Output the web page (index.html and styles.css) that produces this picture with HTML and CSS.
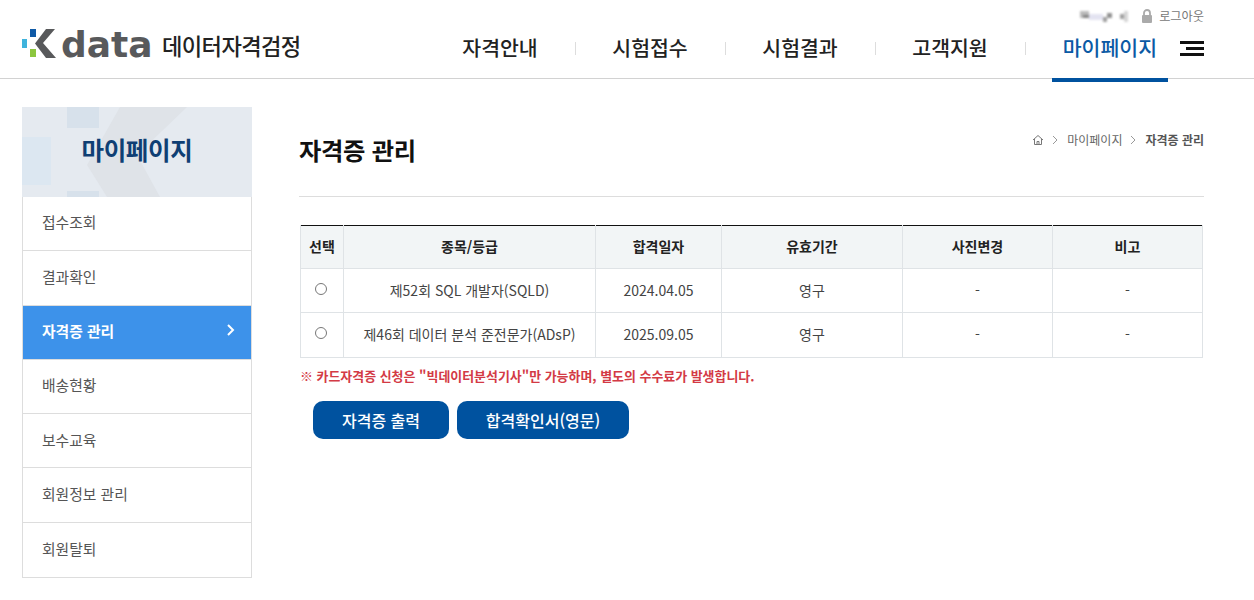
FILE: index.html
```html
<!DOCTYPE html>
<html lang="ko">
<head>
<meta charset="utf-8">
<title>자격증 관리</title>
<link rel="stylesheet" href="styles.css">
</head>
<body>
<header class="header">
  <a class="logo" href="#">
    <svg class="logo-mark" width="36" height="32" viewBox="0 0 36 32">
      <rect x="8" y="1" width="6" height="8" fill="#0f5aa6"/>
      <rect x="0" y="11" width="5" height="9" fill="#3fb3dc"/>
      <rect x="8" y="21" width="6" height="8" fill="#8cc63f"/>
      <polygon points="24,1 33,1 21,15 34,30 24,30 13,15.500" fill="#58595b"/>
    </svg>
    <span class="logo-data">data</span>
    <span class="logo-name">데이터자격검정</span>
  </a>
  <div class="header-right">
    <div class="util">
      <svg class="blur-name" width="48" height="12" viewBox="0 0 48 12">
        <rect x="0" y="1" width="9" height="7" fill="#aaa"/>
        <rect x="3" y="5" width="6" height="3" fill="#666"/>
        <rect x="9" y="4" width="14" height="6" fill="#dde"/>
        <rect x="23" y="7" width="4" height="5" fill="#888"/>
        <rect x="27" y="3" width="5" height="5" fill="#777"/>
        <rect x="40" y="4" width="4" height="5" fill="#888"/>
        <rect x="44" y="1" width="4" height="11" fill="#ccc"/>
      </svg>
      <svg class="lock" width="12" height="14" viewBox="0 0 12 14"><path d="M3 6V4a3 3 0 0 1 6 0v2" fill="none" stroke="#aaa" stroke-width="1.800"/><rect x="1" y="6" width="10" height="8" rx="1" fill="#aaa"/></svg>
      <span class="logout">로그아웃</span>
    </div>
    <nav class="gnb">
      <a class="gnb-item" href="#">자격안내</a>
      <a class="gnb-item" href="#">시험접수</a>
      <a class="gnb-item" href="#">시험결과</a>
      <a class="gnb-item" href="#">고객지원</a>
      <a class="gnb-item active" href="#">마이페이지</a>
      <span class="burger"><i></i><i></i><i></i></span>
    </nav>
  </div>
</header>
<div class="wrap">
  <aside class="side">
    <div class="side-title">
      <svg class="side-bg" width="230" height="90" viewBox="0 0 230 90">
        <rect x="45" y="0" width="32" height="21" fill="#d7e1eb"/>
        <rect x="0" y="30" width="29" height="48" fill="#dce7f1"/>
        <rect x="45" y="84" width="32" height="6" fill="#d7e1eb"/>
        <polygon points="98,0 165,0 115,48 138,90 85,90 65,58" fill="#dfe3e8"/>
      </svg>
      <h2>마이페이지</h2>
    </div>
    <ul class="side-menu">
      <li><a href="#">접수조회</a></li>
      <li><a href="#">결과확인</a></li>
      <li class="on"><a href="#">자격증 관리<svg width="10" height="14" viewBox="0 0 10 14"><path d="M2 2l5 5-5 5" fill="none" stroke="#fff" stroke-width="2"/></svg></a></li>
      <li><a href="#">배송현황</a></li>
      <li><a href="#">보수교육</a></li>
      <li><a href="#">회원정보 관리</a></li>
      <li><a href="#">회원탈퇴</a></li>
    </ul>
  </aside>
  <main class="main">
    <div class="title-row">
      <h1>자격증 관리</h1>
      <div class="crumbs">
        <svg width="12" height="12" viewBox="0 0 12 12"><path d="M1 6l5-4.500L11 6M2.500 5v5.500h7V5M5 10.500V7.500h2v3" fill="none" stroke="#777" stroke-width="1"/></svg>
        <svg class="chev" width="7" height="10" viewBox="0 0 7 10"><path d="M1 1l4 4-4 4" fill="none" stroke="#999" stroke-width="1"/></svg>
        <span>마이페이지</span>
        <svg class="chev" width="7" height="10" viewBox="0 0 7 10"><path d="M1 1l4 4-4 4" fill="none" stroke="#999" stroke-width="1"/></svg>
        <strong>자격증 관리</strong>
      </div>
    </div>
    <table class="tbl">
      <colgroup>
        <col class="c1"><col class="c2"><col class="c3"><col class="c4"><col class="c5"><col class="c6">
      </colgroup>
      <thead>
        <tr><th>선택</th><th>종목/등급</th><th>합격일자</th><th>유효기간</th><th>사진변경</th><th>비고</th></tr>
      </thead>
      <tbody>
        <tr><td><input class="radio" type="radio" name="cert"></td><td>제52회 SQL 개발자(SQLD)</td><td>2024.04.05</td><td>영구</td><td>-</td><td>-</td></tr>
        <tr class="row2"><td><input class="radio" type="radio" name="cert"></td><td>제46회 데이터 분석 준전문가(ADsP)</td><td>2025.09.05</td><td>영구</td><td>-</td><td>-</td></tr>
      </tbody>
    </table>
    <p class="notice">※ 카드자격증 신청은 "빅데이터분석기사"만 가능하며, 별도의 수수료가 발생합니다.</p>
    <div class="btns">
      <a class="btn b1" href="#">자격증 출력</a>
      <a class="btn b2" href="#">합격확인서(영문)</a>
    </div>
  </main>
</div>
</body>
</html>
```
FILE: styles.css
```css
* { box-sizing: border-box; }
html, body { margin: 0; padding: 0; height: 600px; overflow: hidden; background: #fff; }
body { font-family: "Noto Sans CJK KR", "Noto Sans", sans-serif; color: #333; }
a { text-decoration: none; color: inherit; }
ul { list-style: none; margin: 0; padding: 0; }

.header { height: 79px; border-bottom: 1px solid #d2d2d2; display: flex; justify-content: space-between; padding: 0 50px 0 22px; }
.logo { display: flex; align-items: center; height: 32px; margin-top: 28px; }
.logo-mark { flex: none; margin-right: 3px; }
.logo-data { font-family: "DejaVu Sans", sans-serif; font-size: 36px; line-height: 32px; color: #58595b; font-weight: 700; width: 94px; margin-top: 1px; }
.logo-name { font-size: 22.200px; line-height: 32px; font-weight: 500; color: #222; margin: 2px 0 0 7px; letter-spacing: -0.600px; }

.header-right { display: flex; flex-direction: column; align-items: flex-end; }
.util { height: 31px; display: flex; align-items: center; font-size: 12.200px; color: #777; }
.blur-name { margin-right: 13px; filter: blur(1px); opacity: .8; }
.lock { margin-right: 6px; }

.gnb { display: flex; height: 47px; align-items: stretch; }
.gnb-item { position: relative; width: 150px; display: flex; justify-content: center; padding-top: 1px; font-size: 20.500px; line-height: 30px; font-weight: 500; color: #222; }
.gnb-item + .gnb-item::before { content: ""; position: absolute; left: 0; top: 11px; width: 1px; height: 13px; background: #ddd; }
.gnb-item.active { color: #0b5aa5; width: 143px; justify-content: flex-end; padding-right: 11px; }
.gnb-item.active::after { content: ""; position: absolute; right: 0; bottom: -4px; width: 116px; height: 4px; background: #00529f; z-index: 1; }
.burger { width: 24px; margin-left: 12px; display: flex; flex-direction: column; align-items: flex-end; gap: 3px; padding-top: 10px; }
.burger i { display: block; height: 3px; background: #111; width: 24px; }
.burger i:nth-child(2) { width: 18px; }

.wrap { display: flex; padding: 28px 50px 0 22px; }
.side { width: 230px; flex: none; }
.side-title { position: relative; height: 90px; background: #e5eaf0; overflow: hidden; display: flex; align-items: center; justify-content: center; }
.side-bg { position: absolute; left: 0; top: 0; }
.side-title h2 { position: relative; margin: 0 0 4px; font-size: 24.500px; line-height: 36px; font-weight: 700; color: #0f3f74; letter-spacing: -0.300px; }
.side-menu { border: 1px solid #ddd; border-top: 0; }
.side-menu li { height: 54.300px; border-bottom: 1px solid #ddd; }
.side-menu li:last-child { border-bottom: 0; }
.side-menu a { display: flex; height: 100%; align-items: center; justify-content: space-between; padding: 0 15px 3.500px 19px; font-size: 14.800px; color: #555; }
.side-menu .on { background: #3d92ea; }
.side-menu .on a { color: #fff; font-weight: 700; }

.main { width: 905px; margin-left: 47px; }
.title-row { height: 90px; border-bottom: 1px solid #ddd; display: flex; justify-content: space-between; align-items: flex-start; }
.title-row h1 { margin: 23px 0 0; font-size: 24.300px; line-height: 40px; font-weight: 700; color: #111; letter-spacing: -0.300px; }
.crumbs { display: flex; align-items: center; margin: 24px 0 0; font-size: 12px; line-height: 18px; color: #666; }
.crumbs .chev { margin: 0 8px; }
.crumbs strong { color: #555; font-weight: 700; }

.tbl { margin: 28px 0 0 1px; width: 903px; border-collapse: collapse; table-layout: fixed; border-top: 1px solid #111; font-size: 14px; color: #444; }
.c1 { width: 43px; } .c2 { width: 252px; } .c3 { width: 126px; } .c4 { width: 181px; } .c5 { width: 150px; } .c6 { width: 150px; }
.tbl th, .tbl td { border: 1px solid #dfe3e6; text-align: center; padding: 0 0 2px; }
.tbl thead th { border-top: 0; }
.tbl th { height: 43px; background: #f2f5f6; font-weight: 700; color: #222; font-size: 14px; }
.tbl td { height: 44px; }
.tbl .row2 td { height: 45px; }
.radio { appearance: none; -webkit-appearance: none; display: block; width: 12px; height: 12px; margin: -1px auto 0 14px; border: 1px solid #777; border-radius: 50%; background: #fff; }
.row2 .radio { margin-top: -2px; }

.notice { margin: 9px 0 0 1px; font-size: 12.950px; line-height: 18px; font-weight: 700; color: #d33a45; }
.btns { display: flex; gap: 8px; margin: 16px 0 0 14px; }
.btn { height: 38px; display: flex; align-items: center; justify-content: center; background: #00529f; border-radius: 10px; color: #fff; font-size: 16px; font-weight: 500; }
.b1 { width: 136px; } .b2 { width: 172px; }
```
